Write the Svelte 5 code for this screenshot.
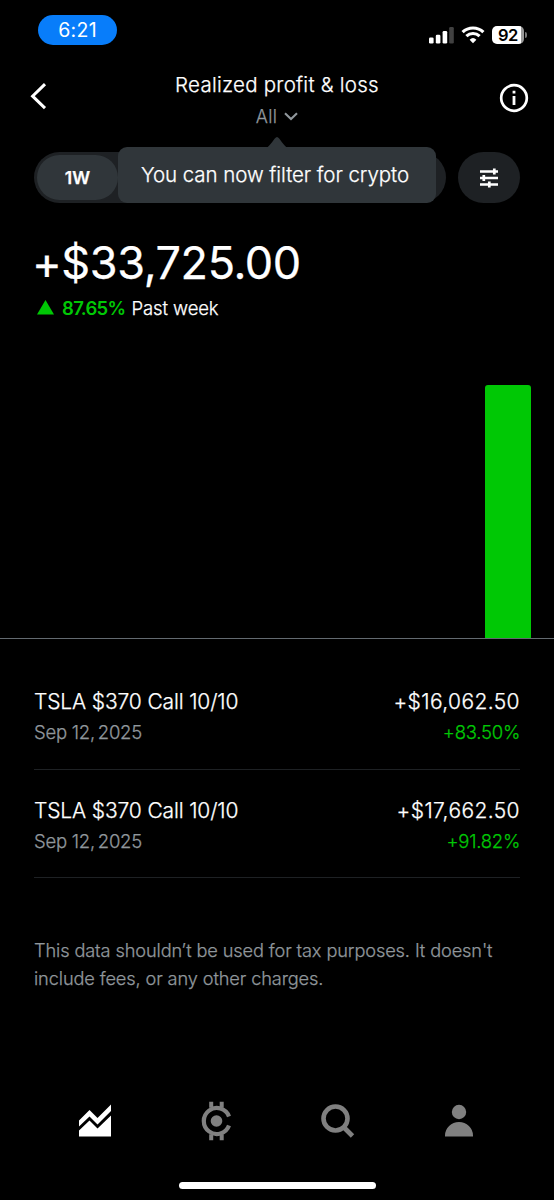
<script lang="ts">
  type Trade = { name: string; date: string; year: string; gain: string; percent: string };

  const trades: Trade[] = [
    { name: 'TSLA $370 Call 10/10', date: 'Sep 12,', year: '2025', gain: '+$16,062.50', percent: '+83.50%' },
    { name: 'TSLA $370 Call 10/10', date: 'Sep 12,', year: '2025', gain: '+$17,662.50', percent: '+91.82%' }
  ];

  // share of the chart height, one entry per day
  const bars = [0, 0, 0, 0, 0, 0, 100];
</script>

<main class="screen">
  <div class="status">
    <span class="clock">6:21</span>
    <div class="signals">
      <svg class="cell" width="25" height="17" viewBox="0 0 25 17">
        <rect x="0" y="10.5" width="4.6" height="6" rx="1.3" fill="#fff" />
        <rect x="6.8" y="7.8" width="4.6" height="8.7" rx="1.3" fill="#fff" />
        <rect x="13.6" y="4" width="4.6" height="12.5" rx="1.3" fill="#fff" />
        <rect x="20.2" y="0" width="4.6" height="16.5" rx="1.3" fill="#414141" />
      </svg>
      <svg class="wifi" width="24" height="18" viewBox="0 0 24 18">
        <path d="M1.6 6.2a15 15 0 0 1 20.8 0" fill="none" stroke="#fff" stroke-width="3.2" />
        <path d="M5.4 10.2a9.5 9.5 0 0 1 13.2 0" fill="none" stroke="#fff" stroke-width="3.1" />
        <path d="M12 17.2l-3.4-3.5a5 5 0 0 1 6.8 0z" fill="#fff" />
      </svg>
      <div class="battery"><span>92</span></div>
      <i class="cap"></i>
    </div>
  </div>

  <header>
    <button type="button" aria-label="Back">
      <svg width="17" height="28" viewBox="0 0 17 28"><path d="M15 2.2 2.6 14.2 15 26.2" fill="none" stroke="#fff" stroke-width="3" /></svg>
    </button>
    <div class="heading">
      <h1>Realized profit &amp; loss</h1>
      <div class="scope">
        <span>All</span>
        <svg width="14" height="9" viewBox="0 0 14 9"><path d="M1 1.2l6 5.8 6-5.8" fill="none" stroke="#90979c" stroke-width="2.1" /></svg>
      </div>
    </div>
    <button type="button" aria-label="Info">
      <svg width="30" height="30" viewBox="0 0 30 30">
        <circle cx="15" cy="15" r="12.8" fill="none" stroke="#fff" stroke-width="2.7" />
        <path d="M13.6 7.8h2.8v2.8h-2.8zM13.6 13h2.8v9h-2.8z" fill="#fff" />
      </svg>
    </button>
  </header>

  <div class="filters">
    <div class="spans"><span class="active">1W</span></div>
    <button type="button" class="tune" aria-label="Filters">
      <svg width="18" height="20" viewBox="0 0 18 20">
        <path d="M0 3.5h18M0 10h18M0 16.5h18" stroke="#fff" stroke-width="2.5" />
        <path d="M14.3 .5v6M3.8 7v6M9.3 13.5v6" stroke="#fff" stroke-width="2.7" />
      </svg>
    </button>
    <div class="tooltip">
      <svg width="22" height="12" viewBox="0 0 22 12"><path d="M0 12C4 11 8.5 1 11 1S18 11 22 12z" fill="#30363a" /></svg>
      <span>You can now filter for crypto</span>
    </div>
  </div>

  <section class="summary">
    <div class="total">+$33,725.00</div>
    <div class="change">
      <svg width="17" height="15" viewBox="0 0 17 15"><path d="M8.5 0 17 14.5H0z" fill="#00c805" /></svg>
      <strong>87.65%</strong>
      <span>Past week</span>
    </div>
  </section>

  <div class="chart">
    {#each bars as value}
      <div class="bar" style="height: {value}%"></div>
    {/each}
  </div>

  <ul class="trades">
    {#each trades as trade}
      <li>
        <div class="line">
          <span class="name">{trade.name}</span>
          <span class="gain">{trade.gain}</span>
        </div>
        <div class="line small">
          <span class="date">{trade.date} <span class="year">{trade.year}</span></span>
          <span class="percent">{trade.percent}</span>
        </div>
      </li>
    {/each}
  </ul>

  <p class="note">
    This data shouldn’t be used for tax purposes. It doesn't<br />
    include fees, or any other charges.
  </p>

  <nav>
    <svg width="32" height="34" viewBox="0 0 32 34" fill="#fff">
      <path d="M0 16.5 10.5 6 18.5 14 32 .5V7L18.5 20.5 10.5 12.5 0 22.5z" />
      <path d="M0 26.5 10.5 16.5 18.5 24.5 32 11.5V32.5H0z" />
    </svg>
    <svg width="31" height="40" viewBox="0 0 31 40">
      <path d="M29 15.5A13 13 0 1 0 29 24.500" fill="none" stroke="#808080" stroke-width="4.2" />
      <circle cx="16.500" cy="20" r="5.8" fill="#808080" />
      <path d="M11.200 .8v6M21.700 .8v6M11.200 33.2v6M21.700 33.2v6" stroke="#808080" stroke-width="4" />
    </svg>
    <svg width="34" height="36" viewBox="0 0 34 36" fill="none" stroke="#808080">
      <circle cx="14.5" cy="15.5" r="12" stroke-width="4.6" />
      <path d="M22.5 24 31.5 33" stroke-width="4.8" />
    </svg>
    <svg width="30" height="34" viewBox="0 0 30 34" fill="#808080">
      <circle cx="15" cy="8" r="7.2" />
      <path d="M1 32.5V31.5A14 13.5 0 0 1 29 31.5V32.5z" />
    </svg>
  </nav>
  <div class="home"></div>
</main>

<style>
  :global(body) {
    background: #000;
  }

  .screen {
    width: 554px;
    height: 1200px;
    overflow: hidden;
    background: #000;
    color: #fff;
    font-family: Inter, "Liberation Sans", sans-serif;
    font-weight: 300;
    -webkit-text-stroke: 0.25px currentColor;
    display: flex;
    flex-direction: column;
    white-space: nowrap;
  }

  svg {
    display: block;
    flex: none;
  }

  button {
    border: 0;
    padding: 0;
    background: none;
  }

  .status {
    height: 70px;
    box-sizing: border-box;
    padding: 15px 27px 0 38px;
    display: flex;
    justify-content: space-between;
    -webkit-text-stroke: 0;
  }

  .clock {
    width: 79px;
    height: 30px;
    border-radius: 15px;
    background: #087dfa;
    font-size: 19.5px;
    font-weight: 400;
    line-height: 31px;
    text-align: center;
    letter-spacing: 0.3px;
  }

  .signals {
    display: flex;
    align-items: center;
    height: 40px;
  }

  .wifi {
    margin: 0 7px;
  }

  .battery {
    width: 32px;
    height: 18px;
    border-radius: 5px;
    background: linear-gradient(90deg, #fff 29px, #999 29px);
    color: #000;
    font-size: 16.5px;
    font-weight: 600;
    line-height: 18px;
  }

  .battery span {
    padding-left: 6px;
    letter-spacing: -0.5px;
  }

  .cap {
    width: 2px;
    height: 6px;
    margin-left: 1px;
    border-radius: 0 2px 2px 0;
    background: #777;
  }

  header {
    height: 82px;
    box-sizing: border-box;
    padding: 0 25px 0 30px;
    display: grid;
    grid-template-columns: 31px 1fr 30px;
  }

  header button {
    height: 56px;
    display: flex;
    align-items: center;
  }

  header button:first-child {
    height: 52px;
  }

  .heading {
    display: flex;
    flex-direction: column;
    align-items: center;
    margin-right: 6px;
  }

  h1 {
    margin: 0;
    font-size: 20.5px;
    font-weight: inherit;
    line-height: 30px;
    letter-spacing: 0.25px;
  }

  .scope {
    display: flex;
    align-items: center;
    gap: 7px;
    height: 33px;
    color: #90979c;
    font-size: 18px;
    letter-spacing: 0.3px;
  }

  .filters {
    position: relative;
    height: 51px;
    margin: 0 34px;
    display: flex;
    justify-content: space-between;
  }

  .spans {
    width: 412px;
    height: 51px;
    box-sizing: border-box;
    padding: 3px;
    border-radius: 26px;
    background: #1e2124;
  }

  .active {
    display: block;
    width: 81px;
    height: 45px;
    border-radius: 23px;
    background: #30363a;
    font-size: 17.5px;
    font-weight: 600;
    line-height: 46px;
    text-align: center;
  }

  .tune {
    width: 62px;
    height: 51px;
    border-radius: 26px;
    background: #1e2124;
    display: flex;
    align-items: center;
    justify-content: center;
  }

  .tooltip {
    position: absolute;
    left: 84px;
    top: -5px;
    width: 314px;
    height: 56px;
    padding-right: 4px;
    border-radius: 9px;
    background: #30363a;
    font-size: 20.5px;
    line-height: 56px;
    text-align: center;
    letter-spacing: -0.06px;
  }

  .tooltip svg {
    position: absolute;
    left: 148px;
    top: -11px;
  }

  .summary {
    height: 182px;
    padding: 0 32px;
  }

  .total {
    padding-top: 31px;
    font-size: 45px;
    font-weight: 400;
    line-height: 58px;
    letter-spacing: -0.4px;
  }

  .change {
    display: flex;
    align-items: center;
    height: 31px;
    padding-left: 5px;
    font-size: 18.5px;
    letter-spacing: -0.1px;
  }

  .change strong {
    margin: 0 6px 0 8px;
    color: #00c805;
    font-weight: 600;
    letter-spacing: -0.7px;
    -webkit-text-stroke: 0;
  }

  .chart {
    height: 253px;
    padding: 0 23px;
    border-bottom: 1px solid #636a70;
    display: grid;
    grid-template-columns: repeat(7, 45.5px);
    justify-content: space-between;
    align-items: end;
  }

  .bar {
    border-radius: 3px 3px 0 0;
    background: #00c805;
  }

  .trades {
    margin: 22px 34px 0;
    padding: 0;
    list-style: none;
  }

  .trades li {
    height: 108.7px;
    box-sizing: border-box;
    padding-top: 25px;
    border-bottom: 1px solid #1e2124;
  }

  .line {
    display: flex;
    justify-content: space-between;
    font-size: 21px;
    line-height: 32px;
  }

  .name {
    letter-spacing: -0.14px;
  }

  .gain {
    letter-spacing: 0.4px;
  }

  .small {
    font-size: 18.5px;
    line-height: 28px;
    letter-spacing: -0.25px;
  }

  .date {
    color: #90979c;
  }

  .year {
    margin-left: -2px;
  }

  .percent {
    color: #00c805;
  }

  .note {
    margin: 58px 34px 0;
    color: #90979c;
    font-size: 18.2px;
    line-height: 28px;
    letter-spacing: -0.12px;
  }

  nav {
    margin-top: auto;
    height: 72px;
    padding: 0 80px 0 79px;
    display: flex;
    justify-content: space-between;
    align-items: center;
    margin-bottom: 25px;
  }

  .home {
    width: 197px;
    height: 7px;
    flex: none;
    margin: 0 auto 11.5px;
    border-radius: 4px;
    background: #fff;
  }
</style>
